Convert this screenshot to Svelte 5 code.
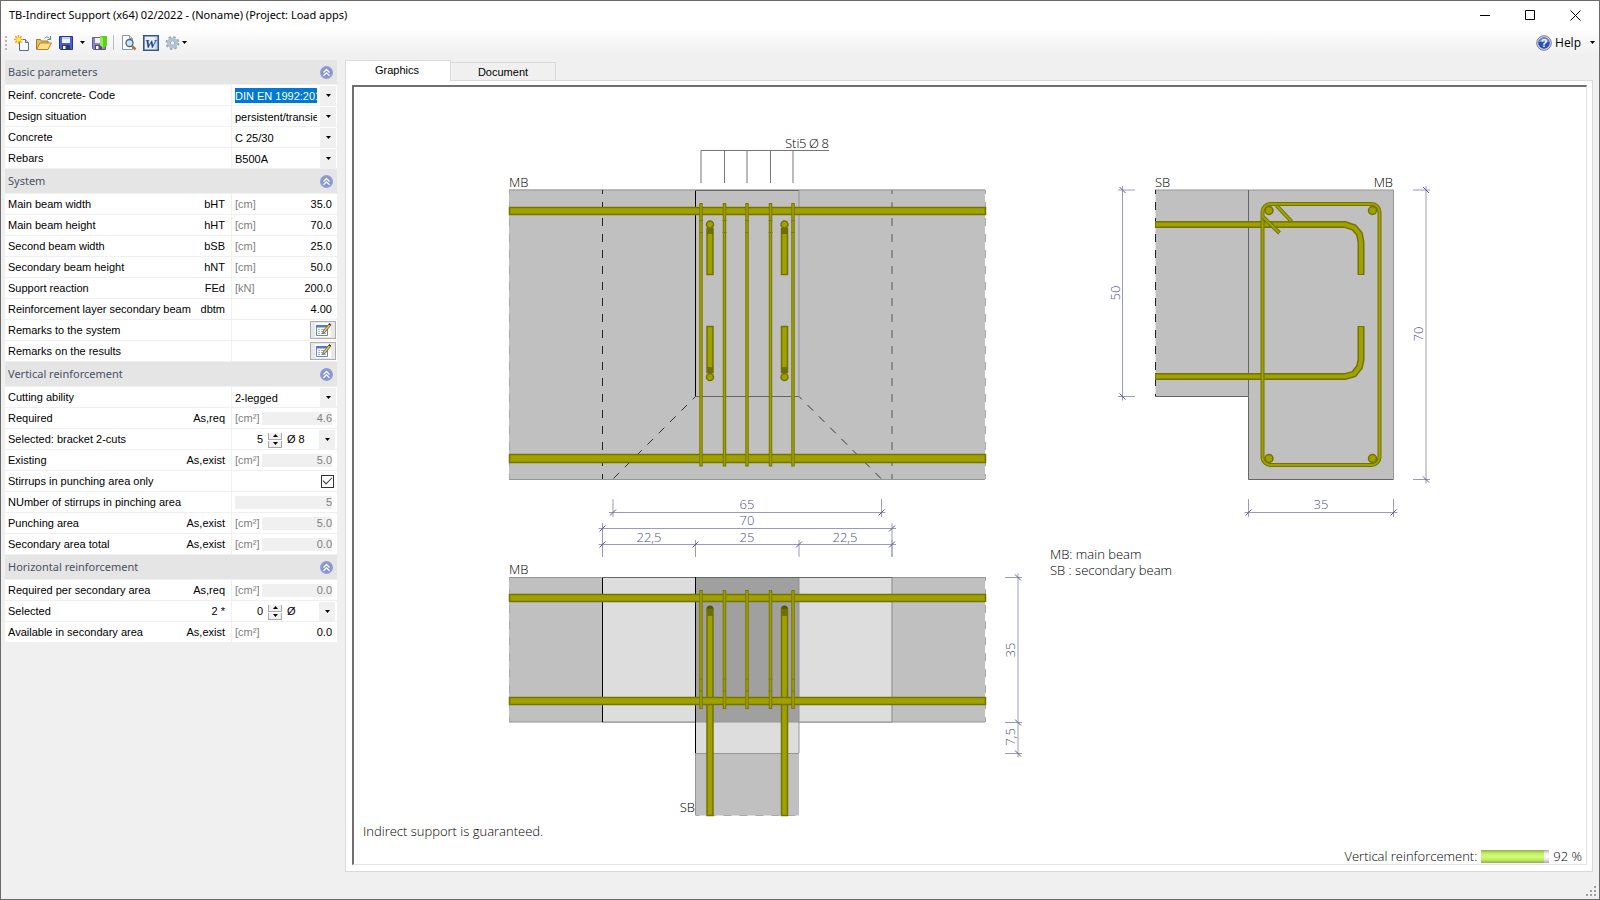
<script>
  const sections = [
    {
      title: 'Basic parameters',
      rows: [
        { id: 'code', label: 'Reinf. concrete- Code', kind: 'select', value: 'DIN EN 1992:2015', active: true },
        { id: 'situation', label: 'Design situation', kind: 'select', value: 'persistent/transient' },
        { id: 'concrete', label: 'Concrete', kind: 'select', value: 'C 25/30' },
        { id: 'rebars', label: 'Rebars', kind: 'select', value: 'B500A' }
      ]
    },
    {
      title: 'System',
      rows: [
        { id: 'bht', label: 'Main beam width', symbol: 'bHT', unit: '[cm]', kind: 'input', value: '35.0' },
        { id: 'hht', label: 'Main beam height', symbol: 'hHT', unit: '[cm]', kind: 'input', value: '70.0' },
        { id: 'bsb', label: 'Second beam width', symbol: 'bSB', unit: '[cm]', kind: 'input', value: '25.0' },
        { id: 'hnt', label: 'Secondary beam height', symbol: 'hNT', unit: '[cm]', kind: 'input', value: '50.0' },
        { id: 'fed', label: 'Support reaction', symbol: 'FEd', unit: '[kN]', kind: 'input', value: '200.0' },
        { id: 'dbtm', label: 'Reinforcement layer secondary beam', symbol: 'dbtm', kind: 'input', value: '4.00' },
        { id: 'remsys', label: 'Remarks to the system', kind: 'edit' },
        { id: 'remres', label: 'Remarks on the results', kind: 'edit' }
      ]
    },
    {
      title: 'Vertical reinforcement',
      rows: [
        { id: 'cut', label: 'Cutting ability', kind: 'select', value: '2-legged' },
        { id: 'vreq', label: 'Required', symbol: 'As,req', unit: '[cm²]', kind: 'output', value: '4.6' },
        { id: 'vsel', label: 'Selected: bracket 2-cuts', kind: 'spin', value: '5', diameter: 'Ø 8' },
        { id: 'vex', label: 'Existing', symbol: 'As,exist', unit: '[cm²]', kind: 'output', value: '5.0' },
        { id: 'only', label: 'Stirrups in punching area only', kind: 'check' },
        { id: 'num', label: 'NUmber of stirrups in pinching area', kind: 'output', value: '5' },
        { id: 'punch', label: 'Punching area', symbol: 'As,exist', unit: '[cm²]', kind: 'output', value: '5.0' },
        { id: 'sec', label: 'Secondary area total', symbol: 'As,exist', unit: '[cm²]', kind: 'output', value: '0.0' }
      ]
    },
    {
      title: 'Horizontal reinforcement',
      rows: [
        { id: 'hreq', label: 'Required per secondary area', symbol: 'As,req', unit: '[cm²]', kind: 'output', value: '0.0' },
        { id: 'hsel', label: 'Selected', symbol: '2 *', kind: 'spin', value: '0', diameter: 'Ø' },
        { id: 'hav', label: 'Available in secondary area', symbol: 'As,exist', unit: '[cm²]', kind: 'input', value: '0.0' }
      ]
    }
  ];

  const stirrups = [701, 724.5, 747, 770.5, 793];
  const anchors = [710, 784.5];
</script>

{#snippet arrow()}
  <svg class="arrow" viewBox="0 0 5 3" aria-hidden="true"><path d="M0 0h5L2.5 3z" /></svg>
{/snippet}

{#snippet bar(x, y, w, h)}
  <rect class="steel" x={x + 0.5} y={y + 0.5} width={w - 1} height={h - 1} />
{/snippet}

{#snippet hdim(y, xs, top, bottom)}
  <path class="dim" d="M{xs[0] - 4} {y}H{xs[xs.length - 1] + 4}" />
  {#each xs as x}
    <path class="dim" d="M{x} {top}V{bottom}" />
    <path class="tick" d="M{x - 3} {y + 3}l6 -6" />
  {/each}
{/snippet}

{#snippet vdim(x, ys, left, right)}
  <path class="dim" d="M{x} {ys[0] - 4}V{ys[ys.length - 1] + 4}" />
  {#each ys as y}
    <path class="dim" d="M{left} {y}H{right}" />
    <path class="tick" d="M{x - 3} {y - 3}l6 6" />
  {/each}
{/snippet}

<div class="window">
  <header class="titlebar">
    <h1>TB-Indirect Support (x64) 02/2022 - (Noname) (Project: Load apps)</h1>
    <div class="controls">
      <button aria-label="Minimize"><svg viewBox="0 0 11 11"><path d="M0 5.5h10" /></svg></button>
      <button aria-label="Maximize"><svg viewBox="0 0 11 11"><path d="M.5.5h9v9h-9z" /></svg></button>
      <button aria-label="Close"><svg viewBox="0 0 11 11"><path d="M.5.5l10 10M10.500.5l-10 10" /></svg></button>
    </div>
  </header>

  <div class="toolbar">
    <span class="grip"></span>
    <button class="tool" aria-label="New">
      <svg viewBox="0 0 16 16">
        <path d="M5.500 4.500h6l3 3v8h-9z" fill="#f7faff" stroke="#56729c" />
        <path d="M11.500 4.500v3h3" fill="#c9d6ea" stroke="#56729c" />
        <path d="M4.500 0v9M0 4.500h9M1.300 1.300l6.400 6.400M7.700 1.300L1.300 7.700" stroke="#f3a41c" stroke-width="1.500" />
        <circle cx="4.500" cy="4.500" r="2.300" fill="#ffe84a" />
      </svg>
    </button>
    <button class="tool" aria-label="Open">
      <svg viewBox="0 0 16 16">
        <path d="M.5 14V4.500h4l1 1.500h6.500v8z" fill="#e9bd5c" stroke="#a87a25" />
        <path d="M.8 14.500l3-6.500h11.700l-3.500 6.500z" fill="#ffdf8a" stroke="#b2842d" />
        <path d="M8.500 3.500c1.500-2 3.500-2 5 0M14.500 1v3.500h-3" fill="none" stroke="#5f7797" />
      </svg>
    </button>
    <button class="tool" aria-label="Save">
      <svg viewBox="0 0 16 16">
        <path d="M1.500 1.500h13v13h-12l-1-1z" fill="#4a5fd0" stroke="#27348f" />
        <path d="M4 2h8v6H4z" fill="#eef3ff" /><path d="M4 2h8v2H4z" fill="#bcd3f5" />
        <path d="M4 10h8v4.500H4z" fill="#2b3a75" /><path d="M5 11h2.500v3H5z" fill="#fff" />
      </svg>
    </button>
    <button class="drop" aria-label="Save options">{@render arrow()}</button>
    <button class="tool" aria-label="Save and close">
      <svg viewBox="0 0 16 16">
        <path d="M1.500 2.500h13v12h-12l-1-1z" fill="#8f7fc4" stroke="#66599a" />
        <path d="M4 3h6v5H4z" fill="#f3f0fb" />
        <path d="M4 10h7v4.500H4z" fill="#51477c" /><path d="M5 11h2.500v3H5z" fill="#fff" />
        <path d="M9 1h7v9.500l-4.500 2.500L9 10z" fill="#5fd01f" /><path d="M9 1l3 2v9.500L9 10z" fill="#8cf04a" />
      </svg>
    </button>
    <span class="sep"></span>
    <button class="tool" aria-label="Print preview">
      <svg viewBox="0 0 16 16">
        <path d="M1.500.5h7l3 3v11h-10z" fill="#fbfcfe" stroke="#8497b3" />
        <path d="M8.500.5v3h3" fill="#d5dfec" stroke="#8497b3" />
        <path d="M11 11l3.500 3.500" stroke="#b8782a" stroke-width="2.500" />
        <circle cx="8.500" cy="8" r="3.500" fill="#cfe6f5" stroke="#50647d" stroke-width="1.300" />
      </svg>
    </button>
    <button class="tool" aria-label="Export to Word">
      <svg viewBox="0 0 16 16">
        <path d="M.8.8h14.400v14.400H.8z" fill="#eaf0fa" stroke="#2f5597" stroke-width="1.600" />
        <path d="M12 2h2v12h-2z" fill="#c8d6ec" />
        <text class="word" x="7.500" y="12.500">W</text>
      </svg>
    </button>
    <button class="tool gear" aria-label="Settings">
      <svg viewBox="0 0 16 16">
        <circle cx="7.500" cy="8" r="5.700" fill="none" stroke="#93a5b3" stroke-width="2.400" stroke-dasharray="2.400 2.070" />
        <circle cx="7.500" cy="8" r="4" fill="none" stroke="#b4c5d2" stroke-width="3" />
        <circle cx="7.500" cy="8" r="2.200" fill="#eff4f8" stroke="#7890a5" stroke-width=".7" />
      </svg>
    </button>
    <button class="drop" aria-label="Settings options">{@render arrow()}</button>
    <button class="help">
      <svg class="helpicon" viewBox="0 0 16 16" aria-hidden="true">
        <circle cx="8" cy="8" r="7.300" fill="#d4d8e0" stroke="#777d8a" />
        <circle cx="8" cy="8" r="5.800" fill="#2a4db8" />
        <path d="M3 7a5 4.500 0 0 1 10 0z" fill="#6c8de0" />
        <text class="question" x="8" y="12">?</text>
      </svg>
      Help
      {@render arrow()}
    </button>
  </div>

  <div class="body">
    <aside class="side">
      {#each sections as section}
        <section>
          <h2>
            {section.title}
            <button class="fold" aria-label="Collapse {section.title}">
              <svg viewBox="0 0 13 13">
                <circle cx="6.500" cy="6.500" r="6.500" fill="#8f9cd6" />
                <circle cx="6.500" cy="6.500" r="5" fill="#8795cf" />
                <path d="M3.500 6.500l3-3 3 3M3.500 9.800l3-3 3 3" fill="none" stroke="#fff" stroke-width="1.300" />
              </svg>
            </button>
          </h2>
          {#each section.rows as row}
            <div class="row">
              <label for={row.id}><span>{row.label}</span><span>{row.symbol ?? ''}</span></label>
              <div class="cell {row.kind}">
                {#if row.unit}<span class="unit">{row.unit}</span>{/if}
                {#if row.kind === 'select'}
                  <select id={row.id} class:active={row.active}><option>{row.value}</option></select>
                  <span class="droparea">{@render arrow()}</span>
                {:else if row.kind === 'input'}
                  <input id={row.id} type="text" value={row.value} />
                {:else if row.kind === 'output'}
                  <input id={row.id} class="locked" type="text" value={row.value} readonly />
                {:else if row.kind === 'check'}
                  <input id={row.id} type="checkbox" checked />
                {:else if row.kind === 'spin'}
                  <input id={row.id} type="text" value={row.value} />
                  <span class="spinner">
                    <button aria-label="Increase"><svg viewBox="0 0 5 3"><path d="M0 3h5L2.500 0z" /></svg></button>
                    <button aria-label="Decrease"><svg viewBox="0 0 5 3"><path d="M0 0h5L2.500 3z" /></svg></button>
                  </span>
                  <select aria-label="Bar diameter"><option>{row.diameter}</option></select>
                  <span class="droparea">{@render arrow()}</span>
                {:else}
                  <button id={row.id} class="note" aria-label={row.label}>
                    <svg viewBox="0 0 16 14">
                      <path d="M1.500 2.500h11v10h-11z" fill="#fff" stroke="#6d87b8" />
                      <path d="M1 2h12v2.500H1z" fill="#4f7ad0" />
                      <path d="M3 6.500h2M6 6.500h5M3 8.500h2M6 8.500h3M3 10.500h2M6 10.500h5" stroke="#9db4dc" />
                      <path d="M7.500 10.500l1-3L14 1l1.500 1.500-5.500 7z" fill="#e5c35c" stroke="#6b5526" stroke-width=".8" />
                      <path d="M14 .5l1.700 1.700" stroke="#3a2b22" stroke-width="1.500" />
                    </svg>
                  </button>
                {/if}
              </div>
            </div>
          {/each}
        </section>
      {/each}
    </aside>

    <main>
      <div class="tabs" role="tablist">
        <button class="tab current" role="tab" aria-selected="true">Graphics</button>
        <button class="tab" role="tab" aria-selected="false">Document</button>
      </div>
      <div class="page">
        <div class="canvas">
          <svg class="drawing" viewBox="354 87 1232 733" preserveAspectRatio="xMinYMin meet" role="img" aria-label="Beam joint drawing">
            <!-- main beam, front view -->
            <rect x="509" y="189.500" width="476" height="290" fill="#c0c0c0" />
            <path class="edge" d="M509 190H985M509 479.500H985" />
            <path class="edge gap" d="M509.500 190V479M985.500 190V479" />
            <path class="dash" d="M602.500 190V479" />
            <path class="dash soft" d="M892 190V479" />
            <path class="line" d="M695.500 190V396.500" />
            <path class="line mid" d="M695 190.500H799M695.500 396.500H799" />
            <path class="edge" d="M799 190V396.500" />
            <path class="dash thin" d="M695.500 396.500L613 479M799 396.500L881.500 479" />
            <path class="leader" d="M701 183V150.500H829M724.500 150V183M747 150V183M770.500 150V183M793 150V183" />
            {@render bar(509, 207, 477, 8)}
            {@render bar(509, 454, 477, 9)}
            {#each anchors as x}
              {@render bar(x - 3.500, 228, 7, 47)}
              <rect x={x - 3} y="228" width="6" height="6" fill="#6f6f00" />
              <circle class="steel" cx={x} cy="224.500" r="3.500" />
              {@render bar(x - 3.500, 326, 7, 47)}
              <rect x={x - 3} y="367" width="6" height="6" fill="#6f6f00" />
              <circle class="steel" cx={x} cy="377" r="3.500" />
            {/each}
            {#each stirrups as x}
              <path class="rod" d="M{x} 203V466.500" /><path class="rodcore" d="M{x} 204V465.500" />
              <path class="knot" d="M{x - 2} 220.500h4M{x - 2} 232.500h4" />
            {/each}
            <text x="509" y="187">MB</text>
            <text x="785" y="148">Sti</text>
            <text x="799" y="148">5</text>
            <text x="809" y="148">Ø</text>
            <text x="829" y="148" text-anchor="end">8</text>

            {@render hdim(512.5, [613, 881.5], 499, 517)}
            {@render hdim(528.5, [602.5, 892], 523, 557)}
            {@render hdim(544.5, [602.5, 695.5, 799, 892], 540, 557)}
            <g class="num">
              <text x="747" y="509">65</text>
              <text x="747" y="525">70</text>
              <text x="649" y="542">22,5</text>
              <text x="747" y="542">25</text>
              <text x="845" y="542">22,5</text>
            </g>

            <!-- plan view -->
            <rect x="509" y="577" width="476" height="145" fill="#c0c0c0" />
            <path class="edge" d="M509 577.500H985M509 722H985" />
            <path class="edge gap" d="M509.500 577V722M985.500 577V722" />
            <rect x="602.500" y="577.500" width="289.500" height="144.500" fill="#ddd" stroke="#888" />
            <path class="line" d="M602.500 577V722" />
            <rect x="695.500" y="722" width="103.500" height="31" fill="#ddd" />
            <rect x="695.500" y="753" width="103.500" height="62.500" fill="#c0c0c0" />
            <rect x="695.500" y="577.500" width="103.500" height="144.500" fill="#a0a0a0" />
            <path class="edge" d="M695.500 722H799M695.500 753.500H799M799 577V753M695.500 753V815" />
            <path class="edge gap" d="M695.500 815.500H799" />
            <path class="line mid" d="M602 577.500H892" />
            <path class="line" d="M695.500 577V753" />
            {#each anchors as x}
              <circle cx={x} cy="609" r="3.500" fill="#555500" />
              {@render bar(x - 3.500, 609, 7, 207)}
              <rect x={x - 3} y="609" width="6" height="7" fill="#6f6f00" />
            {/each}
            {@render bar(509, 594, 477, 8)}
            {@render bar(509, 697, 477, 8)}
            {#each stirrups as x}
              <path class="rod" d="M{x} 590V709" /><path class="rodcore" d="M{x} 591V708" />
              <path class="knot" d="M{x - 2} 679h4M{x - 2} 691h4" />
            {/each}
            <text x="509" y="574">MB</text>
            <text x="695" y="812" text-anchor="end">SB</text>
            {@render vdim(1018, [577.5, 722.5, 753.5], 1005, 1022)}
            <g class="num">
              <text transform="translate(1015 650) rotate(-90)">35</text>
              <text transform="translate(1015 737) rotate(-90)">7,5</text>
            </g>

            <!-- cross section -->
            <rect x="1155.500" y="190" width="93" height="206.500" fill="#c0c0c0" />
            <rect x="1248.500" y="190" width="145" height="289.500" fill="#c0c0c0" />
            <path class="edge" d="M1155 190H1393.500V479" />
            <path class="dash" d="M1155.500 190V396.500" />
            <path class="line mid" d="M1155.500 396.500H1248.500V479.500H1393.500M1248.500 190V396.500" />
            <path class="bend" d="M1155 224.500H1345L1354 227.500L1359.500 234L1361 242V275" />
            <path class="bendcore" d="M1156 224.500H1345L1354 227.500L1359.500 234L1361 242V274" />
            <path class="bend" d="M1155 376.500H1345L1354 374L1359.500 367L1361 360V326" />
            <path class="bendcore" d="M1156 376.500H1345L1354 374L1359.500 367L1361 360V327" />
            <rect class="loop" x="1262.500" y="204" width="117" height="261" rx="8" />
            <rect class="loopcore" x="1262.500" y="204" width="117" height="261" rx="8" />
            <path class="loop" d="M1276.500 205.500L1291.500 221.500M1263 217L1279.500 233" />
            <path class="loopcore" d="M1277 206L1291 221M1263 217L1279 232.500" />
            <circle class="steel" cx="1269" cy="210.500" r="4" />
            <circle class="steel" cx="1372.500" cy="210.500" r="4" />
            <circle class="steel" cx="1269" cy="458.500" r="4" />
            <circle class="steel" cx="1372.500" cy="458.500" r="4" />
            <text x="1155" y="187">SB</text>
            <text x="1393" y="187" text-anchor="end">MB</text>
            {@render vdim(1122.5, [190, 396.5], 1118, 1135)}
            {@render vdim(1426, [190, 479.5], 1413, 1430)}
            {@render hdim(512.5, [1248.5, 1393.5], 499, 517)}
            <g class="num">
              <text transform="translate(1120 293) rotate(-90)">50</text>
              <text transform="translate(1423 334) rotate(-90)">70</text>
              <text x="1321" y="509">35</text>
            </g>

            <text x="1050" y="559">MB: main beam</text>
            <text x="1050" y="575">SB : secondary beam</text>
          </svg>
          <p class="verdict">Indirect support is guaranteed.</p>
          <div class="usage">
            <label for="usage">Vertical reinforcement:</label>
            <progress id="usage" max="100" value="92"></progress>
            <span>92 %</span>
          </div>
        </div>
      </div>
    </main>
  </div>
  <footer>
    <svg viewBox="0 0 11 11" aria-hidden="true">
      <path d="M8 0h2v2H8zM4 4h2v2H4zM8 4h2v2H8zM0 8h2v2H0zM4 8h2v2H4zM8 8h2v2H8z" fill="#a0a0a0" />
    </svg>
  </footer>
</div>

<style>
  :global(body) { margin: 0; }
  * { box-sizing: border-box; }
  button, input, select { font: inherit; color: inherit; border: 0; padding: 0; margin: 0; background: none; border-radius: 0; }
  svg { display: block; }

  .window {
    display: flex; flex-direction: column; min-height: 100vh;
    border: 1px solid #6b6b6b; background: #f0f0f0; color: #000;
    font: 11px/16px "Liberation Sans", Arial, sans-serif;
  }
  .titlebar { display: flex; align-items: center; justify-content: space-between; height: 30px; padding: 0 1px 2px 0; background: #fff; }
  h1 { margin: 0; padding-left: 8px; font: 11px/16px "Noto Sans", sans-serif; }
  .controls { display: flex; align-self: stretch; }
  .controls button { display: flex; align-items: center; justify-content: center; width: 45px; }
  .controls svg { width: 11px; height: 11px; fill: none; stroke: #000; }

  .toolbar { display: flex; align-items: center; height: 25px; padding: 0 4px 2px 4px; background: linear-gradient(#fdfdfd, #f0f0f0); }
  .grip { width: 2px; height: 14px; margin-right: 7px; background: repeating-linear-gradient(#b5b5b5 0 2px, transparent 2px 4px); }
  .tool { margin-right: 6px; }
  .tool svg { width: 16px; height: 16px; }
  .tool.gear { margin-right: 1px; }
  .word { font: italic bold 13px "Liberation Serif", serif; fill: #1f3f86; text-anchor: middle; }
  .drop { display: flex; align-items: center; height: 16px; padding: 0 6px 0 0; }
  .arrow { width: 5px; height: 3px; }
  .sep { width: 1px; height: 15px; margin-right: 7px; background: #bdbdbd; }
  .help { display: flex; align-items: center; gap: 3px; margin-left: auto; font: 12px/16px "Open Sans", sans-serif; }
  .help .arrow { margin-left: 6px; }
  .helpicon { width: 16px; height: 16px; }
  .question { font: bold 11px "Liberation Sans", sans-serif; fill: #fff; text-anchor: middle; }

  .body { display: flex; flex: 1; padding: 4px 6px 0 4px; gap: 8px; }
  .side { width: 332px; flex: none; }
  h2 {
    display: flex; align-items: center; justify-content: space-between; height: 25px; margin: 0; padding: 0 4px 0 3px;
    border-bottom: 1px solid #f0f0f0; background: #e5e5e5; color: #4b5064; font: 11px/16px "Noto Sans", sans-serif;
  }
  .fold svg { width: 13px; height: 13px; }
  .row { display: flex; height: 21px; border-bottom: 1px solid #f0f0f0; background: #fff; }
  .row label { display: flex; justify-content: space-between; align-items: center; width: 227px; padding: 0 6px 0 3px; border-right: 1px solid #f0f0f0; }
  .cell { display: flex; align-items: center; flex: 1; min-width: 0; padding: 0 5px 0 3px; }
  .unit { flex: none; width: 27px; color: #808080; }
  .cell input[type='text'] { flex: 1; min-width: 0; height: 13px; text-align: right; }
  .cell input.locked { background: #f0f0f0; color: #808080; }
  .cell select { appearance: none; flex: 1; min-width: 0; height: 15px; overflow: hidden; text-overflow: clip; }
  .cell select.active { background: #0078d7; color: #fff; }
  .cell.select, .cell.spin, .cell.edit { padding-right: 1px; }
  .cell.edit { justify-content: flex-end; }
  .cell.check { padding-right: 3px; justify-content: flex-end; }
  .droparea { display: flex; align-items: center; justify-content: center; width: 16px; height: 19px; margin-left: 3px; background: #f0f0f0; pointer-events: none; }
  .cell.spin { padding-right: 2px; }
  .cell.spin input[type='text'] { flex: none; width: 28px; }
  .cell.spin select { margin-bottom: 2px; }
  .spinner { display: flex; flex-direction: column; gap: 1px; margin: 2px 5px 0; }
  .spinner button { display: flex; align-items: center; justify-content: center; width: 14px; height: 7px; background: #f0f0f0; border: 1px solid #a8a8a8; border-top: 0; }
  .spinner svg { width: 5px; height: 3px; }
  .note { display: flex; align-items: center; justify-content: center; width: 26px; height: 18px; border: 1px solid #adadad; background: #e8e8e8; }
  .note svg { width: 16px; height: 14px; background: #fff; }
  input[type='checkbox'] { appearance: none; display: grid; place-items: center; width: 13px; height: 13px; border: 1px solid #333; background: #fff; }
  input[type='checkbox']:checked::after {
    content: ''; width: 8px; height: 4px; margin-top: -3px; border: solid #333; border-width: 0 0 1px 1px; transform: rotate(-45deg);
  }

  main { display: flex; flex-direction: column; flex: 1; min-width: 0; }
  .tabs { display: flex; align-items: flex-end; height: 20px; }
  .tab { width: 105px; height: 18px; border: 1px solid #d9d9d9; border-width: 1px 1px 0 0; background: #f0f0f0; }
  .tab.current { width: 106px; height: 21px; margin-bottom: -1px; border-left-width: 1px; padding: 0 2px 3px 0; background: #fff; z-index: 1; }
  .page { display: flex; flex: 1; padding: 4px 5px 6px 6px; border: 1px solid #d9d9d9; background: #fff; }
  .canvas {
    display: flex; flex-direction: column; flex: 1; min-width: 0; background: #fff;
    border-style: solid; border-width: 2px 1px 1px 2px; border-color: #6f6f6f #e3e3e3 #e3e3e3 #6f6f6f;
    font: 300 13px/16px "Open Sans", sans-serif;
  }
  .drawing { width: 100%; flex: 1; min-height: 0; }
  .verdict { margin: 0; padding: 3px 9px 5px; }
  .usage { display: flex; align-items: center; justify-content: flex-end; gap: 4px; margin-top: 4px; padding-right: 4px; }
  progress { appearance: none; width: 68px; height: 13px; border: 0; }
  progress::-webkit-progress-bar { background: linear-gradient(#aaa, #eee 25%, #fff 50%, #e4e4e4 75%, #aaa); }
  progress::-webkit-progress-value { background: linear-gradient(#93a958, #bff05c 25%, #d2fa7c 50%, #bff05c 75%, #93a958); }

  footer { display: flex; align-items: flex-end; justify-content: flex-end; height: 27px; padding: 0 2px 2px; }
  footer svg { width: 11px; height: 11px; }

  .drawing text { font: 300 13px "Open Sans", sans-serif; fill: #000; }
  .drawing .num text { fill: #50508a; text-anchor: middle; }
  .edge { fill: none; stroke: #959595; }
  .gap { stroke: #a8a8a8; stroke-dasharray: 8 8; stroke-dashoffset: 4; }
  .line { fill: none; stroke: #000; }
  .mid { stroke: #666; }
  .dash { fill: none; stroke: #222; stroke-dasharray: 8 8; stroke-dashoffset: 4; }
  .soft { stroke: #8c8c8c; stroke-width: 2; }
  .thin { stroke: #333; }
  .leader { fill: none; stroke: #777; }
  .steel { fill: #a0a000; stroke: #737300; stroke-width: 1.5; }
  .rod { stroke: #777700; stroke-width: 3.5; }
  .rodcore { stroke: #a0a000; stroke-width: 1.5; }
  .knot { stroke: #7a7a20; }
  .bend { fill: none; stroke: #737300; stroke-width: 7; }
  .bendcore { fill: none; stroke: #a0a000; stroke-width: 4; }
  .loop { fill: none; stroke: #737300; stroke-width: 4; }
  .loopcore { fill: none; stroke: #a0a000; stroke-width: 2; }
  .dim { fill: none; stroke: #9a9abc; }
  .tick { fill: none; stroke: #5c5c8e; }
</style>
